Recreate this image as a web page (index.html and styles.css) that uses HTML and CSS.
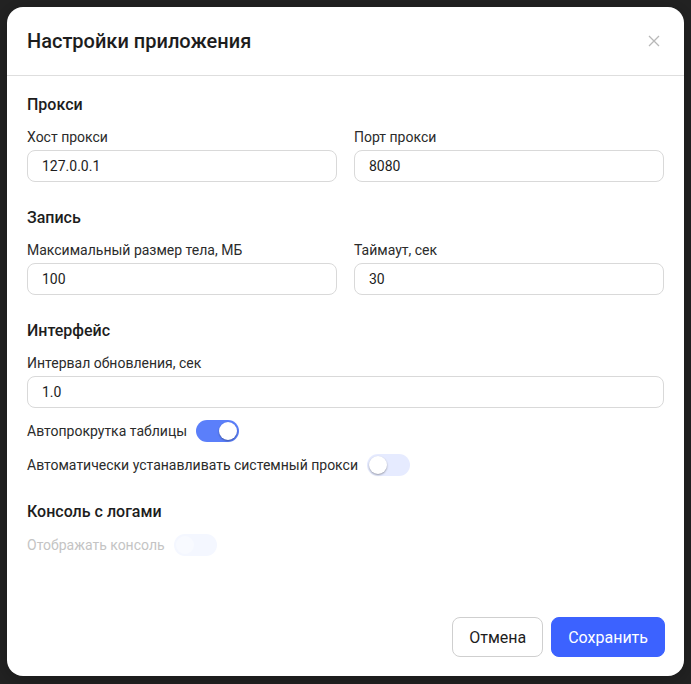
FILE: index.html
```html
<!DOCTYPE html>
<html lang="ru">
<head>
    <meta charset="UTF-8">
    <meta name="viewport" content="width=device-width, initial-scale=1.0">
    <title>Настройки приложения</title>
    <link rel="stylesheet" href="styles.css">
</head>
<body>

<div class="modal">
    <header class="modal-header">
        <h1>Настройки приложения</h1>
        <button class="close-btn" aria-label="Закрыть">
            <svg width="12" height="12" viewBox="0 0 12 12">
                <path d="M1 1L11 11M11 1L1 11" stroke="#b8b8b8" stroke-width="1.3" fill="none"/>
            </svg>
        </button>
    </header>

    <div class="modal-body">
        <section class="group">
            <h2>Прокси</h2>
            <div class="row">
                <div class="field">
                    <label>Хост прокси</label>
                    <input type="text" value="127.0.0.1">
                </div>
                <div class="field">
                    <label>Порт прокси</label>
                    <input type="text" value="8080">
                </div>
            </div>
        </section>

        <section class="group">
            <h2>Запись</h2>
            <div class="row">
                <div class="field">
                    <label>Максимальный размер тела, МБ</label>
                    <input type="text" value="100">
                </div>
                <div class="field">
                    <label>Таймаут, сек</label>
                    <input type="text" value="30">
                </div>
            </div>
        </section>

        <section class="group">
            <h2>Интерфейс</h2>
            <div class="field">
                <label>Интервал обновления, сек</label>
                <input type="text" value="1.0">
            </div>
            <div class="switch-row">
                <span>Автопрокрутка таблицы</span>
                <span class="switch on"><span class="knob"></span></span>
            </div>
            <div class="switch-row">
                <span>Автоматически устанавливать системный прокси</span>
                <span class="switch"><span class="knob"></span></span>
            </div>
        </section>

        <section class="group">
            <h2>Консоль с логами</h2>
            <div class="switch-row disabled">
                <span>Отображать консоль</span>
                <span class="switch"><span class="knob"></span></span>
            </div>
        </section>
    </div>

    <footer class="modal-footer">
        <button class="btn">Отмена</button>
        <button class="btn primary">Сохранить</button>
    </footer>
</div>

</body>
</html>
```

FILE: styles.css
```css
* {
    box-sizing: border-box;
}

body {
    font-family: Roboto, "Noto Sans", Arial, sans-serif;
    background-color: #232323;
    margin: 0;
    padding: 7px;
    width: 691px;
    height: 684px;
}

.modal {
    width: 677px;
    height: 669px;
    background: #fff;
    border-radius: 16px;
    display: flex;
    flex-direction: column;
    box-shadow: 0 4px 24px rgba(0, 0, 0, 0.3);
}

.modal-header {
    height: 69px;
    border-bottom: 1px solid #dedede;
    display: flex;
    align-items: center;
    justify-content: space-between;
    padding: 0 20px;
}

.modal-header h1 {
    margin: 0;
    font-size: 20px;
    font-weight: 500;
    color: #1d1d1d;
}

.close-btn {
    background: none;
    border: none;
    padding: 0;
    margin-right: 4px;
    cursor: pointer;
    display: flex;
}

.modal-body {
    flex: 1;
    padding: 18px 20px 0;
    display: flex;
    flex-direction: column;
    gap: 25px;
}

.group {
    display: flex;
    flex-direction: column;
    gap: 12px;
}

.group h2 {
    margin: 0;
    font-size: 16px;
    line-height: 21px;
    font-weight: 500;
    color: #1d1d1d;
}

.row {
    display: flex;
    gap: 17px;
}

.row .field {
    flex: 1;
}

.field {
    display: flex;
    flex-direction: column;
    gap: 3px;
}

.field label {
    font-size: 14px;
    line-height: 20px;
    color: #2b2b2b;
}

.field input {
    height: 32px;
    border: 1px solid #d9d9d9;
    border-radius: 8px;
    padding: 0 14px;
    font-family: inherit;
    font-size: 14px;
    color: #1d1d1d;
    outline: none;
}

.switch-row {
    display: flex;
    align-items: center;
    gap: 9px;
    font-size: 14px;
    color: #2b2b2b;
    height: 22px;
}

.switch {
    width: 43px;
    height: 22px;
    border-radius: 11px;
    background: #e6ebff;
    position: relative;
}

.switch .knob {
    position: absolute;
    top: 2px;
    left: 2px;
    width: 18px;
    height: 18px;
    border-radius: 50%;
    background: #fff;
    box-shadow: 0 1px 2px rgba(0, 0, 0, 0.35);
}

.switch.on {
    background: #5b7ffa;
}

.switch.on .knob {
    left: 23px;
}

.switch-row.disabled {
    color: #c4c4c4;
}

.switch-row.disabled .switch {
    background: #f4f7ff;
}

.switch-row.disabled .knob {
    background: #f8faff;
    box-shadow: none;
}

.modal-footer {
    display: flex;
    justify-content: flex-end;
    gap: 8px;
    padding: 0 19px 19px;
}

.btn {
    height: 40px;
    padding: 0 16px;
    border-radius: 8px;
    border: 1px solid #cfcfcf;
    background: #fff;
    font-family: inherit;
    font-size: 16px;
    color: #1d1d1d;
    cursor: pointer;
}

.btn.primary {
    background: #3c62ff;
    border-color: #3c62ff;
    color: #fff;
}
```
